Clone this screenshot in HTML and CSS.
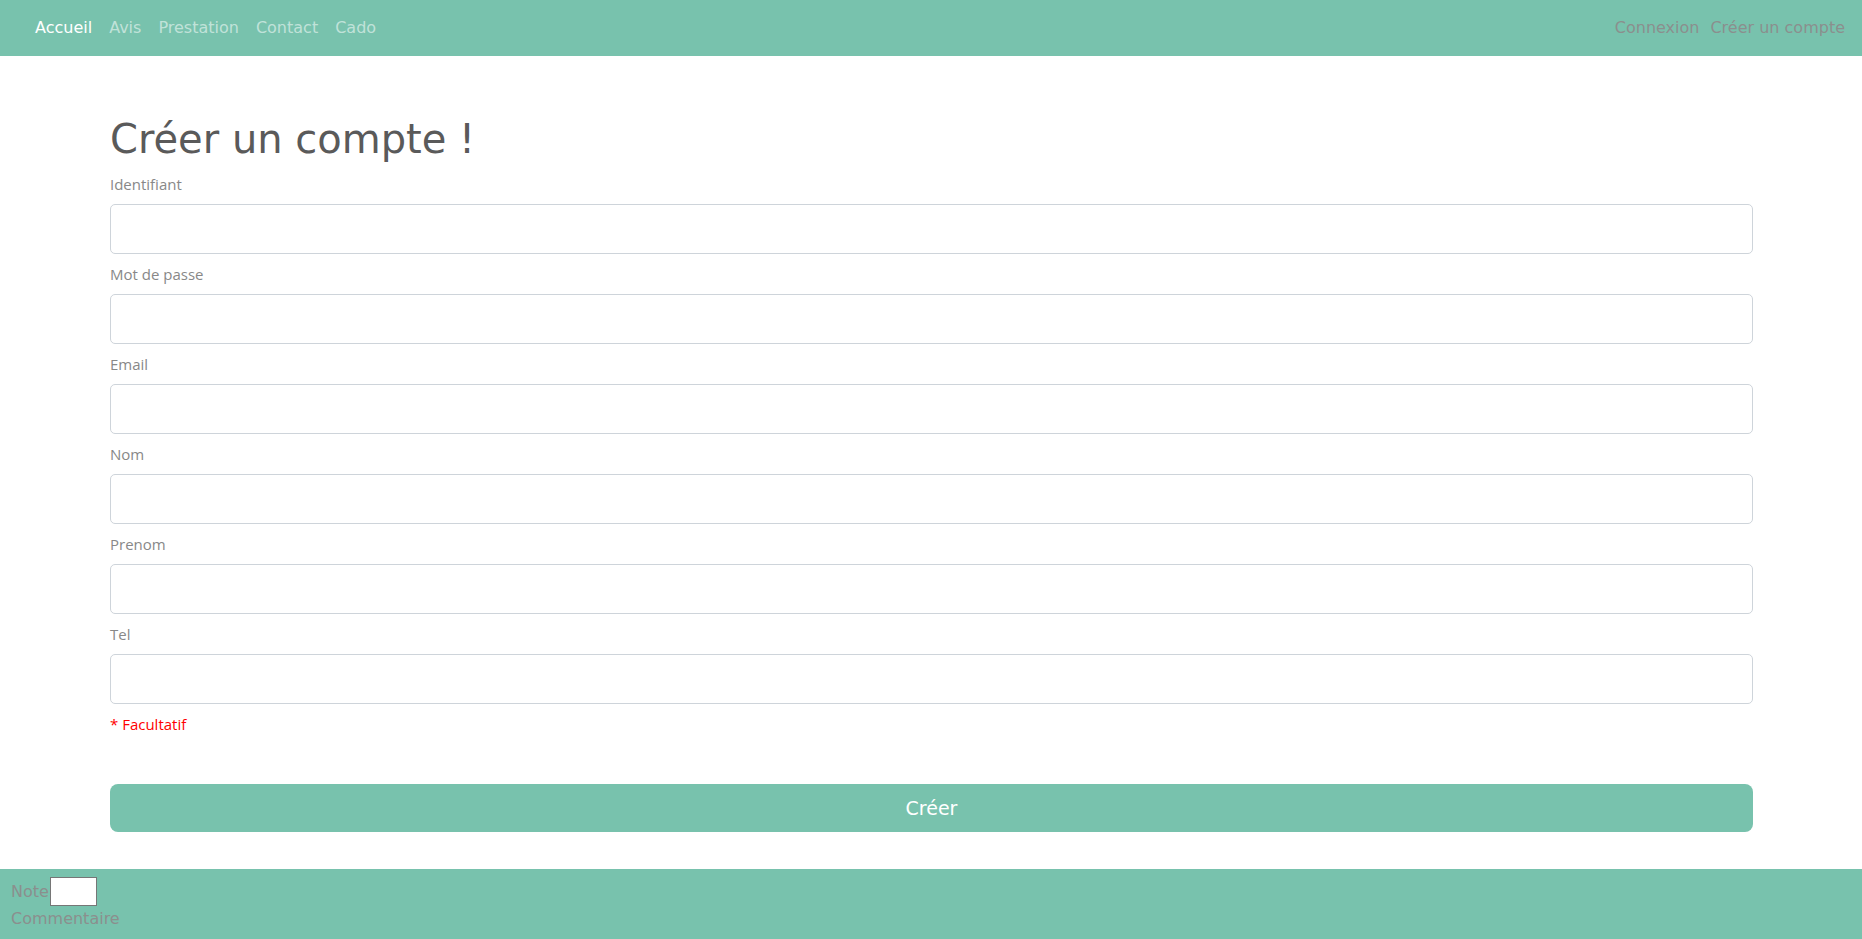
FILE: index.html
```html
<!DOCTYPE html>
<html lang="fr">
<head>
<meta charset="utf-8">
<title>Créer un compte</title>
<link rel="stylesheet" href="styles.css">
</head>
<body>
<nav class="navbar">
  <ul class="nav-left">
    <li><a class="nav-link active" href="#">Accueil</a></li>
    <li><a class="nav-link" href="#">Avis</a></li>
    <li><a class="nav-link" href="#">Prestation</a></li>
    <li><a class="nav-link" href="#">Contact</a></li>
    <li><a class="nav-link" href="#">Cado</a></li>
  </ul>
  <ul class="nav-right">
    <li><a class="nav-link-alt" href="#">Connexion</a></li>
    <li><a class="nav-link-alt" href="#">Créer un compte</a></li>
  </ul>
</nav>
<main class="main">
  <h1 class="title">Créer un compte !</h1>
  <form class="form">
    <label class="label">Identifiant</label>
    <input class="field" type="text">
    <label class="label">Mot de passe</label>
    <input class="field" type="password">
    <label class="label">Email</label>
    <input class="field" type="text">
    <label class="label">Nom</label>
    <input class="field" type="text">
    <label class="label">Prenom</label>
    <input class="field" type="text">
    <label class="label">Tel</label>
    <input class="field" type="text">
    <p class="note-opt">* Facultatif</p>
    <button class="btn" type="button">Créer</button>
  </form>
</main>
<footer class="footer">
  <div class="foot-row"><span>Note</span><input class="foot-input" type="text"></div>
  <div class="foot-row2">Commentaire</div>
</footer>
</body>
</html>
```
FILE: styles.css
```css
* { box-sizing: border-box; }
html, body { margin: 0; padding: 0; }
body {
  background: #fff;
  font-family: "Open Sans", "Noto Sans", sans-serif;
  color: #888;
  width: 1862px;
  height: 939px;
  overflow: hidden;
}
.navbar {
  background: #78c2ad;
  height: 56px;
  display: flex;
  justify-content: space-between;
  align-items: center;
  padding: 0 17px 0 27px;
}
.nav-left, .nav-right {
  list-style: none;
  margin: 0;
  padding: 0;
  display: flex;
}
.nav-link, .nav-link-alt {
  font-family: "DejaVu Sans", sans-serif;
  font-size: 16px;
  line-height: 24px;
  text-decoration: none;
  display: block;
  padding: 8px 8px;
}
.nav-link { color: rgba(255,255,255,0.55); margin-right: 1px; }
.nav-link.active { color: #fff; }
.nav-link-alt { color: #8b8f8d; padding: 8px 0 8px 11px; }
.main {
  padding: 59px 109px 37px 110px;
}
.title {
  font-family: "DejaVu Sans", sans-serif;
  font-weight: 400;
  font-size: 40px;
  line-height: 48px;
  color: #5a5a5a;
  margin: 0 0 9px 0;
}
.form { display: flex; flex-direction: column; }
.label {
  font-size: 15px;
  line-height: 24px;
  color: #888;
  margin-bottom: 8px;
}
.field {
  height: 50px;
  border: 1px solid #ced4da;
  border-radius: 5px;
  margin-bottom: 8px;
  padding: 6px 12px;
  font-size: 15px;
  background: #fff;
}
.note-opt {
  margin: 0;
  font-size: 15px;
  line-height: 24px;
  color: #ff0000;
}
.btn {
  margin-top: 48px;
  height: 48px;
  border: none;
  border-radius: 8px;
  background: #78c2ad;
  color: #fff;
  font-family: "DejaVu Sans", sans-serif;
  font-size: 19px;
}
.footer {
  background: #78c2ad;
  padding: 8px 11px 11px 11px;
  font-family: "DejaVu Sans", sans-serif;
  font-size: 16px;
  line-height: 19px;
  color: #8b8f8d;
  height: 70px;
}
.foot-row { display: flex; align-items: center; height: 29px; }
.foot-input {
  width: 47px;
  height: 29px;
  border: 1px solid #767676;
  background: #fff;
  margin-left: 1px;
  padding: 0;
}
.foot-row2 { margin-top: 3px; }
```
